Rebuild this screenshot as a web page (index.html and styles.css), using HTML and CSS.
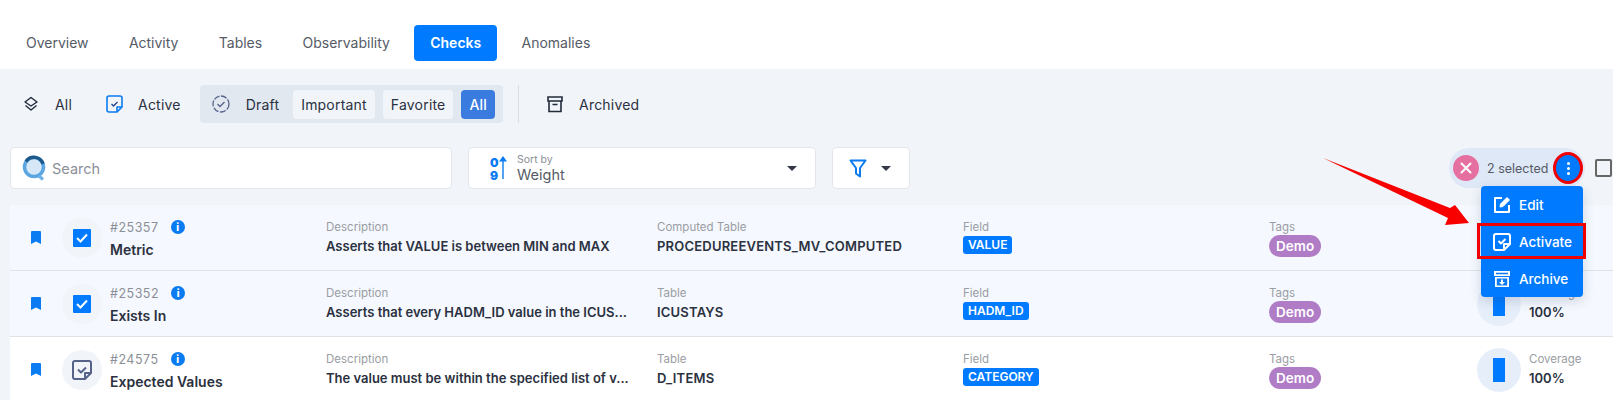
FILE: index.html
```html
<!DOCTYPE html>
<html lang="en">
<head>
    <meta charset="UTF-8">
    <title>Checks</title>
    <link rel="stylesheet" href="styles.css">
</head>
<body>
    <nav class="tabs">
        <a class="tab">Overview</a>
        <a class="tab">Activity</a>
        <a class="tab">Tables</a>
        <a class="tab">Observability</a>
        <a class="tab tab-active">Checks</a>
        <a class="tab">Anomalies</a>
    </nav>

    <section class="panel">
        <div class="filters">
            <div class="filter filter-all">
                <svg width="16" height="16" viewBox="0 0 16 16" fill="none" stroke="#222b3a" stroke-width="1.4" stroke-linejoin="round"><path d="M8 1.5 14 6 8 10 2 6Z"/><path d="M2.5 9.5 8 14l5.5-4.5"/></svg>
                <span>All</span>
            </div>
            <div class="filter filter-active">
                <svg width="17" height="18" viewBox="0 0 17 18" fill="none" stroke="#0a7bf0" stroke-width="1.6" stroke-linejoin="round"><path d="M3 1h11a2 2 0 0 1 2 2v9l-5 5H3a2 2 0 0 1-2-2V3a2 2 0 0 1 2-2Z"/><path d="M16 12h-5v5" /><path d="m5.500 9 2 2 4-4" stroke="#1f3f8a" stroke-width="1.3"/></svg>
                <span>Active</span>
            </div>
            <div class="filter-group">
                <div class="filter filter-draft">
                    <svg width="18" height="18" viewBox="0 0 18 18" fill="none" stroke="#56628a" stroke-width="1.300"><circle cx="9" cy="9" r="8" stroke-dasharray="6 1.500"/><path d="m5.500 9 2.500 2.500 4.500-4.500"/></svg>
                    <span>Draft</span>
                </div>
                <span class="chip">Important</span>
                <span class="chip">Favorite</span>
                <span class="chip chip-on">All</span>
            </div>
            <div class="filter-line"></div>
            <div class="filter filter-archived">
                <svg width="16" height="18" viewBox="0 0 16 18" fill="none" stroke="#222b3a" stroke-width="1.600"><path d="M1 2h14v4H1zM2 6v10.500h12V6M5.500 9.500h5"/></svg>
                <span>Archived</span>
            </div>
        </div>

        <div class="toolbar">
            <label class="search">
                <svg width="26" height="28" viewBox="0 0 26 28" fill="none">
                    <circle cx="12" cy="13" r="9.500" fill="#d6e8f8" stroke="#5ba6e0" stroke-width="3.500"/>
                    <path d="M4 7.500A9.500 9.500 0 0 1 21 10" stroke="#1c5a8c" stroke-width="3.500"/>
                    <path d="m17 22 4 3.500" stroke="#6db1e6" stroke-width="3"/>
                </svg>
                <span>Search</span>
            </label>
            <div class="select">
                <svg width="20" height="26" viewBox="0 0 20 26" fill="#0a7bf0"><text x="0" y="11.500" class="digit">0</text><text x="0" y="24.500" class="digit">9</text><path d="M12.300 24V5h1.400v19ZM13 1l4 5.500H9Z"/></svg>
                <div class="select-text">
                    <small>Sort by</small>
                    <span>Weight</span>
                </div>
                <i class="caret"></i>
            </div>
            <div class="select select-filter">
                <svg width="18" height="19" viewBox="0 0 18 19" fill="none" stroke="#0a7bf0" stroke-width="2" stroke-linejoin="round"><path d="M1.500 1.500h15L11 9v8.500L7 14.500V9Z"/></svg>
                <i class="caret"></i>
            </div>
            <div class="selected">
                <span class="selected-x">
                    <svg width="12" height="12" viewBox="0 0 12 12" stroke="#fff" stroke-width="2" stroke-linecap="round"><path d="m1.500 1.500 9 9M10.500 1.500l-9 9"/></svg>
                </span>
                <span class="selected-text">2 selected</span>
                <span class="kebab"><i></i><i></i><i></i></span>
            </div>
            <span class="check-all"></span>
        </div>
    </section>

    <section class="list">
        <div class="row row-tinted">
            <svg class="bookmark" width="10" height="13" viewBox="0 0 10 13" fill="#0a7bf0"><path d="M1 0h8a1 1 0 0 1 1 1v12L5 10.500 0 13V1a1 1 0 0 1 1-1Z"/></svg>
            <div class="state"><span class="tick"><svg width="12" height="10" viewBox="0 0 12 10" fill="none" stroke="#fff" stroke-width="2"><path d="m1 5 3.500 3.500L11 1.500"/></svg></span></div>
            <div class="name">
                <div class="id">#25357 <i class="info">i</i></div>
                <strong>Metric</strong>
            </div>
            <div class="cell"><small>Description</small><b>Asserts that VALUE is between MIN and MAX</b></div>
            <div class="cell"><small>Computed Table</small><b class="caps">PROCEDUREEVENTS_MV_COMPUTED</b></div>
            <div class="cell"><small>Field</small><span class="field">VALUE</span></div>
            <div class="cell"><small>Tags</small><span class="tag">Demo</span></div>
            <div class="coverage"><div class="gauge"><i></i></div><div class="cell"><small>Coverage</small><b>100%</b></div></div>
        </div>
        <div class="row row-tinted">
            <svg class="bookmark" width="10" height="13" viewBox="0 0 10 13" fill="#0a7bf0"><path d="M1 0h8a1 1 0 0 1 1 1v12L5 10.500 0 13V1a1 1 0 0 1 1-1Z"/></svg>
            <div class="state"><span class="tick"><svg width="12" height="10" viewBox="0 0 12 10" fill="none" stroke="#fff" stroke-width="2"><path d="m1 5 3.500 3.500L11 1.500"/></svg></span></div>
            <div class="name">
                <div class="id">#25352 <i class="info">i</i></div>
                <strong>Exists In</strong>
            </div>
            <div class="cell"><small>Description</small><b>Asserts that every HADM_ID value in the ICUS...</b></div>
            <div class="cell"><small>Table</small><b class="caps">ICUSTAYS</b></div>
            <div class="cell"><small>Field</small><span class="field">HADM_ID</span></div>
            <div class="cell"><small>Tags</small><span class="tag">Demo</span></div>
            <div class="coverage"><div class="gauge"><i></i></div><div class="cell"><small>Coverage</small><b>100%</b></div></div>
        </div>
        <div class="row">
            <svg class="bookmark" width="10" height="13" viewBox="0 0 10 13" fill="#0a7bf0"><path d="M1 0h8a1 1 0 0 1 1 1v12L5 10.500 0 13V1a1 1 0 0 1 1-1Z"/></svg>
            <div class="state"><svg width="20" height="20" viewBox="0 0 20 20" fill="none" stroke="#56628a" stroke-width="2" stroke-linejoin="round"><path d="M3 1h14a2 2 0 0 1 2 2v10l-6 6H3a2 2 0 0 1-2-2V3a2 2 0 0 1 2-2Z"/><path d="M19 13h-6v6"/><path d="m6 9.500 3 3 5-5"/></svg></div>
            <div class="name">
                <div class="id">#24575 <i class="info">i</i></div>
                <strong>Expected Values</strong>
            </div>
            <div class="cell"><small>Description</small><b>The value must be within the specified list of v...</b></div>
            <div class="cell"><small>Table</small><b class="caps">D_ITEMS</b></div>
            <div class="cell"><small>Field</small><span class="field">CATEGORY</span></div>
            <div class="cell"><small>Tags</small><span class="tag">Demo</span></div>
            <div class="coverage"><div class="gauge"><i></i></div><div class="cell"><small>Coverage</small><b>100%</b></div></div>
        </div>
    </section>

    <div class="menu">
        <a class="menu-item">
            <svg width="18" height="18" viewBox="0 0 18 18" fill="none" stroke="#fff" stroke-width="2" stroke-linejoin="round"><path d="M9 2H2v14h14V9"/><path d="m7 11 .5-3L14 1.500l2.500 2.500L10 10.500Z" fill="#fff" stroke-width="1"/></svg>
            Edit
        </a>
        <a class="menu-item">
            <svg width="18" height="18" viewBox="0 0 18 18" fill="none" stroke="#fff" stroke-width="2" stroke-linejoin="round"><path d="M3 1h12a2 2 0 0 1 2 2v8l-6 6H3a2 2 0 0 1-2-2V3a2 2 0 0 1 2-2Z"/><path d="M17 11h-6v6"/><path d="m5.500 8 2.500 2.500 4.500-4.500"/></svg>
            Activate
        </a>
        <a class="menu-item">
            <svg width="18" height="18" viewBox="0 0 18 18" fill="#fff"><path d="M1 1h16v5H1ZM2 7h14v10H2Z"/><path d="M3 2.800h12v1.400H3ZM3.800 8.500h10.400v7H3.800Z" fill="#0a7bf0"/><path d="M8 9.500h2V12h2l-3 3-3-3h2Z"/></svg>
            Archive
        </a>
        <div class="menu-mark"></div>
    </div>

    <svg class="arrow" width="150" height="70" viewBox="0 0 150 70" fill="#f80000"><path d="M0 0 127 50 132 47 146 65 122 67 125 60Z"/></svg>
</body>
</html>
```

FILE: styles.css
```css
*{
    padding:0;
    margin:0;
    box-sizing: border-box;
}
html,body{
    height: 400px;
    overflow: hidden;
}
body{
    position: relative;
    background-color: #F1F5FA;
    font-family: "Inter", "Liberation Sans", sans-serif;
    color: #2b3140;
}
i{
    font-style: normal;
}

/* tabs */
.tabs{
    display: flex;
    gap: 8.3px;
    height: 69px;
    padding: 25px 0 0 10px;
    background-color: #fff;
}
.tab{
    height: 36px;
    padding: 0 16px;
    line-height: 36px;
    font-size: 14px;
    color: #555b66;
    border-radius: 4px;
}
.tab-active{
    background-color: #007BFF;
    color: #fff;
    font-weight: 600;
}

/* filters + toolbar */
.panel{
    height: 136px;
    padding-top: 16px;
}
.filters{
    display: flex;
    align-items: center;
    height: 38px;
    font-size: 14px;
    letter-spacing: .2px;
    color: #2b3140;
}
.filter{
    display: flex;
    align-items: center;
}
.filter-all{
    margin-left: 23px;
    gap: 16px;
}
.filter-active{
    margin-left: 34px;
    gap: 15px;
}
.filter-draft{
    gap: 16px;
    margin: 0 6px 0 12px;
}
.filter-group{
    display: flex;
    align-items: center;
    gap: 8px;
    height: 38px;
    margin-left: 19px;
    padding-right: 8px;
    background-color: #E2E8F0;
    border-radius: 4px;
}
.chip{
    height: 29px;
    padding: 0 8px;
    line-height: 29px;
    background-color: #F1F5FA;
    border-radius: 4px;
}
.chip-on{
    background-color: #3A7BE0;
    color: #fff;
    font-weight: 500;
}
.filter-line{
    width: 1px;
    height: 38px;
    margin-left: 15px;
    background-color: #d9dfe7;
}
.filter-archived{
    margin-left: 28px;
    gap: 16px;
}

.toolbar{
    display: flex;
    align-items: center;
    height: 42px;
    margin-top: 24px;
    padding-left: 10px;
}
.search,.select{
    display: flex;
    align-items: center;
    height: 42px;
    background-color: #fff;
    border: 1px solid #E2E6EC;
    border-radius: 4px;
}
.search{
    width: 442px;
    gap: 4px;
    padding-left: 11px;
    font-size: 14.5px;
    color: #8b8f97;
}
.select{
    width: 348px;
    margin-left: 16px;
    padding: 0 18px 0 21px;
}
.digit{
    font-size: 12px;
    font-weight: 900;
}
.select-text{
    flex: 1;
    display: flex;
    flex-direction: column;
    margin-left: 7px;
    color: #555b66;
    font-size: 14.5px;
    line-height: 17px;
}
.select-text small{
    font-size: 10.5px;
    line-height: 12px;
    color: #8b8f97;
}
.caret{
    width: 0;
    height: 0;
    border-left: 5px solid transparent;
    border-right: 5px solid transparent;
    border-top: 5px solid #333945;
}
.select-filter{
    width: 78px;
    margin-left: 16px;
    padding: 0 18px 0 16px;
    justify-content: space-between;
}
.selected{
    display: flex;
    align-items: center;
    width: 136px;
    height: 40px;
    margin-left: auto;
    padding-left: 4px;
    background-color: #DFE8F6;
    border-radius: 20px;
}
.selected-x{
    display: flex;
    align-items: center;
    justify-content: center;
    width: 26px;
    height: 26px;
    background-color: #E56FA0;
    border-radius: 50%;
}
.selected-text{
    margin-left: 8px;
    font-size: 12.5px;
    color: #555b66;
    white-space: nowrap;
}
.kebab{
    display: flex;
    flex-direction: column;
    align-items: center;
    justify-content: center;
    gap: 2px;
    width: 30px;
    height: 32px;
    margin-left: 5px;
    background-color: #007BFF;
    border: 3px solid #f00000;
    border-radius: 50%;
    flex-shrink: 0;
}
.kebab i{
    width: 3px;
    height: 3px;
    background-color: #fff;
    border-radius: 50%;
}
.check-all{
    width: 17px;
    height: 18px;
    margin: 0 1px 0 10px;
    border: 2px solid #666;
    border-radius: 2px;
    flex-shrink: 0;
}

/* list */
.list{
    padding-left: 10px;
}
.row{
    display: grid;
    grid-template-columns: 31px 48px 216px 331px 306px 306px 208px 1fr;
    height: 66px;
    padding: 14px 0 0 21px;
    background-color: #fff;
    border-bottom: 1px solid #dfe3e8;
}
.row-tinted{
    background-color: #F5F8FE;
}
.bookmark{
    margin-top: 12px;
}
.state{
    display: flex;
    align-items: center;
    justify-content: center;
    width: 40px;
    height: 40px;
    margin-top: -1px;
    background-color: #F1F5FA;
    border-radius: 50%;
}
.tick{
    display: flex;
    align-items: center;
    justify-content: center;
    width: 18px;
    height: 18px;
    background-color: #007BFF;
    border-radius: 1px;
}
.name{
    display: flex;
    flex-direction: column;
    gap: 7px;
}
.id{
    display: flex;
    align-items: center;
    gap: 12px;
    height: 16px;
    font-size: 12.5px;
    letter-spacing: .5px;
    color: #8b8f97;
}
.info{
    width: 14px;
    height: 14px;
    background-color: #0a7bf0;
    border-radius: 50%;
    color: #fff;
    font-size: 10px;
    font-weight: 800;
    line-height: 14px;
    letter-spacing: 0;
    text-align: center;
}
.name strong{
    font-size: 14px;
    line-height: 16px;
    font-weight: 600;
}
.cell{
    display: flex;
    flex-direction: column;
    align-items: flex-start;
    gap: 3px;
}
.cell small{
    font-size: 11.5px;
    line-height: 16px;
    color: #9a9da3;
}
.cell b{
    font-size: 13px;
    line-height: 16px;
    font-weight: 600;
    white-space: nowrap;
}
.cell .caps{
    letter-spacing: .2px;
}
.field{
    height: 18px;
    margin-top: -2px;
    padding: 0 5px;
    background-color: #007BFF;
    border-radius: 3px;
    color: #fff;
    font-size: 12px;
    font-weight: 600;
    line-height: 18px;
}
.tag{
    height: 22px;
    margin-top: -3px;
    padding: 0 7px;
    background-color: #B07CC6;
    border-radius: 11px;
    color: #fff;
    font-size: 13.5px;
    font-weight: 600;
    line-height: 22px;
}
.coverage{
    display: flex;
    gap: 8px;
}
.gauge{
    display: flex;
    align-items: center;
    justify-content: center;
    width: 44px;
    height: 44px;
    margin-top: -3px;
    background-color: #E6EEFA;
    border-radius: 50%;
}
.gauge i{
    width: 12px;
    height: 24px;
    background-color: #007BFF;
}

/* row actions menu, opened over the list */
.menu{
    position: absolute;
    top: 186px;
    left: 1481px;
    width: 102px;
    background-color: #007BFF;
    border-radius: 4px;
    box-shadow: 0 4px 12px rgba(30,50,90,.18);
}
.menu-item{
    display: flex;
    align-items: center;
    gap: 8px;
    height: 37px;
    padding-left: 12px;
    color: #fff;
    font-size: 13.5px;
    font-weight: 500;
}
.menu-mark{
    position: absolute;
    top: 37px;
    left: -4px;
    width: 109px;
    height: 36px;
    border: 3px solid #f00000;
}
.arrow{
    position: absolute;
    top: 158px;
    left: 1323px;
}
```
